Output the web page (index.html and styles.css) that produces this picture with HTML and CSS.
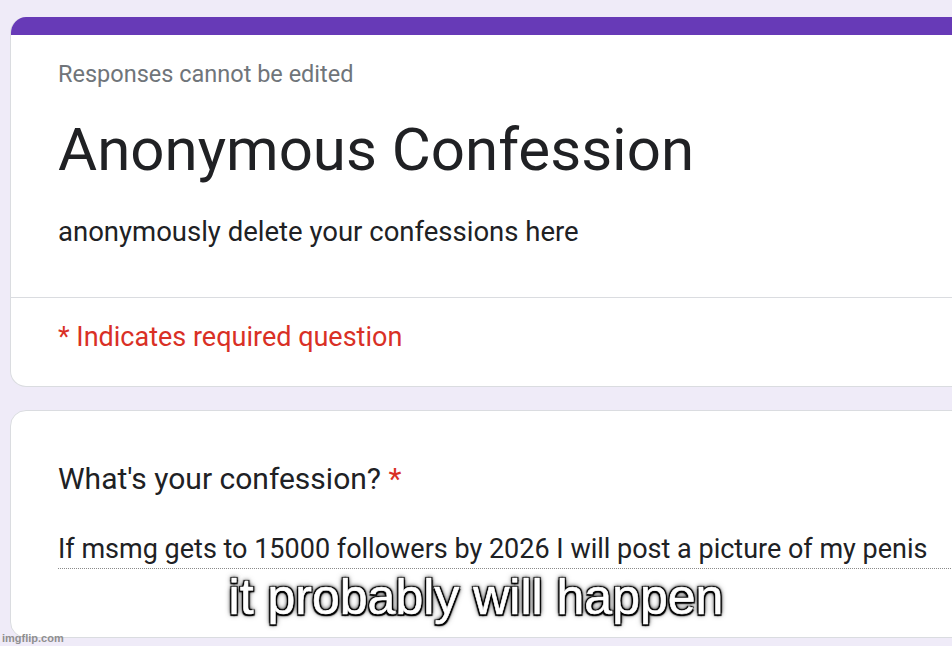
FILE: index.html
```html
<!DOCTYPE html>
<html>
<head>
<meta charset="utf-8">
<link rel="stylesheet" href="styles.css">
</head>
<body>
<div class="page">
  <div class="card header-card">
    <div class="accent"></div>
    <div class="header-main">
      <div class="note">Responses cannot be edited</div>
      <h1 class="title">Anonymous Confession</h1>
      <div class="desc">anonymously delete your confessions here</div>
    </div>
    <div class="header-foot">
      <div class="required">* Indicates required question</div>
    </div>
  </div>
  <div class="card question-card">
    <div class="question">What's your confession? <span class="star">*</span></div>
    <div class="answer">If msmg gets to 15000 followers by 2026 I will post a picture of my penis</div>
  </div>
  <div class="caption">it probably will happen</div>
  <div class="watermark">imgflip.com</div>
</div>
</body>
</html>
```
FILE: styles.css
```css
html, body {
  margin: 0;
  padding: 0;
}
body {
  background: #efebf8;
  font-family: Roboto, "Noto Sans", Arial, sans-serif;
  overflow: hidden;
}
.page {
  position: relative;
  width: 952px;
  height: 646px;
  overflow: hidden;
  padding-top: 17px;
  padding-left: 10px;
  box-sizing: border-box;
}
.card {
  width: 980px;
  background: #fff;
  border: 1px solid #dadce0;
  border-radius: 16px;
  box-sizing: border-box;
}
.header-card {
  border-top: none;
  overflow: hidden;
}
.accent {
  height: 18px;
  background: #673ab7;
  margin: 0 -1px;
}
.header-main {
  padding: 24px 0 48px 47px;
  border-bottom: 1px solid #dadce0;
}
.note {
  font-size: 23.5px;
  line-height: 30px;
  color: #70757a;
}
.title {
  margin: 26px 0 0;
  font-size: 60px;
  line-height: 70px;
  font-weight: 400;
  color: #202124;
}
.desc {
  margin-top: 30px;
  font-size: 27.5px;
  line-height: 34px;
  color: #202124;
}
.header-foot {
  padding: 22px 0 32px 47px;
}
.required {
  font-size: 27px;
  line-height: 34px;
  color: #d93025;
}
.question-card {
  margin-top: 23px;
  height: 228px;
  padding: 50px 0 0 47px;
}
.question {
  font-size: 30px;
  line-height: 36px;
  color: #202124;
}
.star {
  color: #d93025;
}
.answer {
  margin-top: 35px;
  font-size: 27px;
  line-height: 34px;
  color: #202124;
  padding-bottom: 2px;
  border-bottom: 1px dotted #8a8a8a;
}
.caption {
  position: absolute;
  left: 0;
  right: 0;
  top: 569px;
  text-align: center;
  font-family: "Liberation Sans", Arial, sans-serif;
  font-size: 50px;
  line-height: 56px;
  color: #fff;
  -webkit-text-stroke: 0.6px #fff;
  text-shadow: -1.5px -1.5px 1px #000, 1.5px -1.5px 1px #000, -1.5px 1.5px 1px #000, 1.5px 1.5px 1px #000, 0 0 4px #000, 0 0 6px rgba(0,0,0,0.7);
}
.watermark {
  position: absolute;
  left: 2px;
  bottom: 2px;
  font-family: "Liberation Sans", Arial, sans-serif;
  font-weight: bold;
  font-size: 11px;
  color: #8f8f8f;
}
```
